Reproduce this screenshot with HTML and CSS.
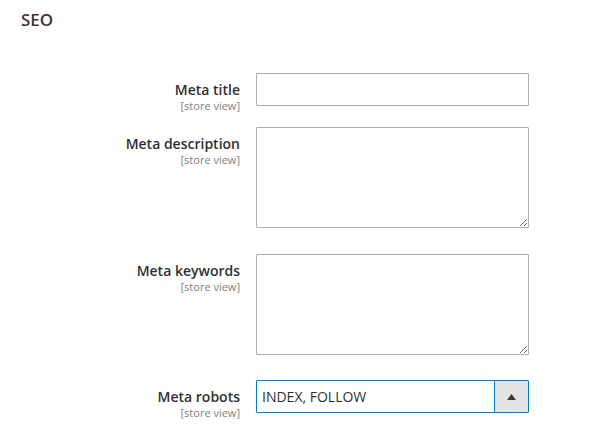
FILE: index.html
```html
<!DOCTYPE html>
<html>
<head>
<meta charset="utf-8">
<link rel="stylesheet" href="styles.css">
</head>
<body>
<div class="section">
  <h2 class="section-title">SEO</h2>
  <div class="fields">
    <div class="field">
      <div class="label"><span class="label-text">Meta title</span><span class="scope">[store view]</span></div>
      <div class="control"><input class="input" type="text"></div>
    </div>
    <div class="field">
      <div class="label"><span class="label-text">Meta description</span><span class="scope">[store view]</span></div>
      <div class="control"><textarea class="textarea"></textarea></div>
    </div>
    <div class="field">
      <div class="label"><span class="label-text">Meta keywords</span><span class="scope">[store view]</span></div>
      <div class="control"><textarea class="textarea textarea-last"></textarea></div>
    </div>
    <div class="field">
      <div class="label"><span class="label-text">Meta robots</span><span class="scope">[store view]</span></div>
      <div class="control">
        <div class="select">
          <span class="select-value">INDEX, FOLLOW</span>
          <span class="select-btn"><svg width="9" height="6" viewBox="0 0 9 6"><path d="M0 6 L4.5 0 L9 6 Z" fill="#41362f"/></svg></span>
        </div>
      </div>
    </div>
  </div>
</div>
</body>
</html>
```

FILE: styles.css
```css
* { box-sizing: border-box; }
html, body { margin: 0; padding: 0; background: #fff; }
body { font-family: "Open Sans", "Liberation Sans", sans-serif; color: #303030; min-height: 427px; }
.section { padding: 9px 0 0 21px; }
.section-title {
  margin: 0;
  font-size: 17px;
  font-weight: 600;
  color: #41362f;
  line-height: 22px;
}
.fields { margin-top: 42px; display: flex; flex-direction: column; gap: 21px; }
.field { display: flex; align-items: flex-start; }
.label {
  width: 235px;
  min-height: 33px;
  padding-right: 16px;
  padding-top: 7px;
  display: flex;
  flex-direction: column;
  align-items: flex-end;
  text-align: right;
}
.label-text { font-size: 14px; font-weight: 600; line-height: 19px; color: #303030; }
.scope { font-size: 11px; line-height: 13px; color: #808080; margin-bottom: -6px; }
.control { width: 273px; }
.input {
  display: block;
  width: 273px;
  height: 33px;
  border: 1px solid #adadad;
  border-radius: 1px;
  margin: 0;
  font: inherit;
}
.textarea {
  display: block;
  width: 273px;
  height: 101px;
  border: 1px solid #adadad;
  border-radius: 1px;
  margin: 0 0 5px;
  font: inherit;
  resize: vertical;
}
.textarea-last { margin-bottom: 4px; }
.select {
  display: flex;
  height: 33px;
  border: 1px solid #007bdb;
  border-radius: 1px;
}
.select-value {
  flex: 1;
  font-size: 14px;
  line-height: 31px;
  padding-left: 5px;
  color: #303030;
}
.select-btn {
  width: 34px;
  background: #e3e3e3;
  border-left: 1px solid #007bdb;
  display: flex;
  align-items: center;
  justify-content: center;
}
```
